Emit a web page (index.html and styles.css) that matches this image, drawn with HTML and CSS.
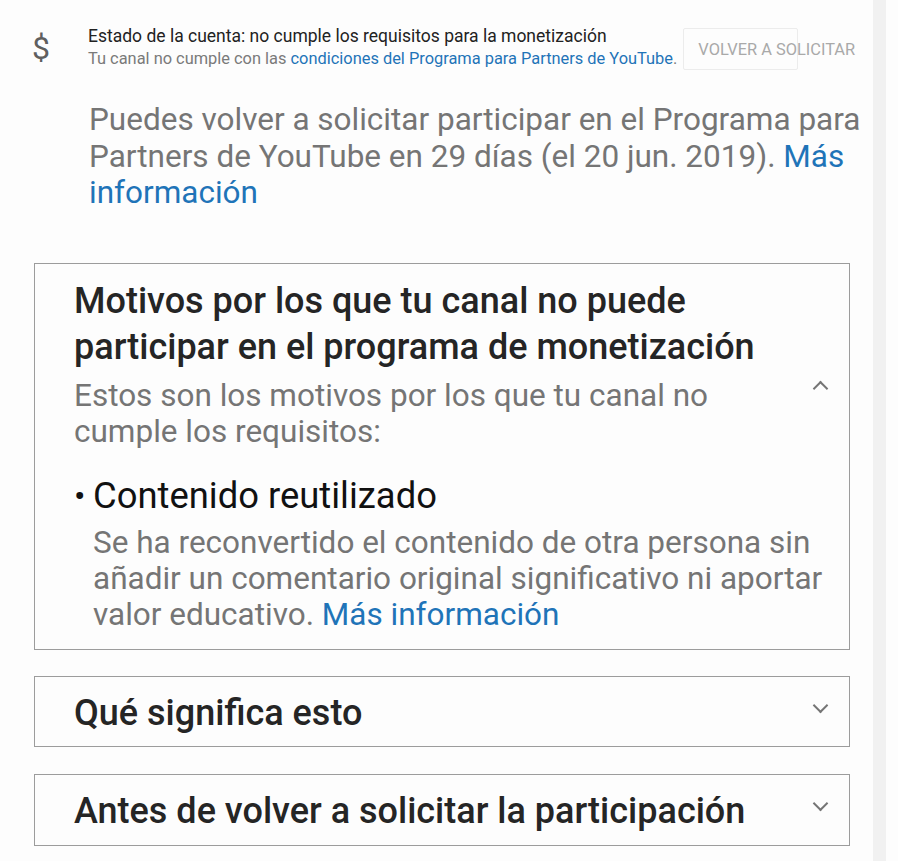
FILE: index.html
```html
<!DOCTYPE html>
<html lang="es">
<head>
    <meta charset="UTF-8">
    <meta name="viewport" content="width=device-width, initial-scale=1.0">
    <title>Estado de la cuenta</title>
    <link rel="stylesheet" href="styles.css">
</head>
<body>

    <div class="page">
        <div class="main">

            <div class="status">
                <div class="status-icon">$</div>
                <div class="status-text">
                    <div class="status-title">Estado de la cuenta: no cumple los requisitos para la monetización</div>
                    <div class="status-sub">Tu canal no cumple con las <a href="#">condiciones del Programa para Partners de YouTube</a>.</div>
                </div>
                <button type="button" class="reapply">VOLVER A SOLICITAR</button>
            </div>

            <p class="notice">
                Puedes volver a solicitar participar en el Programa para Partners de YouTube en 29 días (el 20 jun. 2019). <a href="#">Más información</a>
            </p>

            <div class="card open">
                <h2>Motivos por los que tu canal no puede participar en el programa de monetización</h2>
                <span class="chevron up"></span>
                <p class="card-sub">Estos son los motivos por los que tu canal no cumple los requisitos:</p>

                <div class="reason">
                    <div class="reason-title"><span class="bullet">•</span>Contenido reutilizado</div>
                    <p class="reason-text">Se ha reconvertido el contenido de otra persona sin añadir un comentario original significativo ni aportar valor educativo. <a href="#">Más información</a></p>
                </div>
            </div>

            <div class="card">
                <h2>Qué significa esto</h2>
                <span class="chevron"></span>
            </div>

            <div class="card last">
                <h2>Antes de volver a solicitar la participación</h2>
                <span class="chevron"></span>
            </div>

        </div>
        <div class="track"></div>
    </div>

</body>
</html>
```

FILE: styles.css
```css
body {
    margin: 0;
    font-family: Roboto, "Liberation Sans", sans-serif;
    background-color: #fdfdfd;
}

a {
    color: #1f74b8;
    text-decoration: none;
}

.page {
    display: flex;
    height: 100vh;
    overflow: hidden;
}

.main {
    width: 816px;
    padding: 25px 23px 0 34px;
}

.track {
    width: 13px;
    background-color: #f1f1f1;
}

.status {
    display: flex;
    align-items: flex-start;
}

.status-icon {
    width: 54px;
    margin-left: -2px;
    padding: 3px 0 0 0;
    font-size: 32px;
    line-height: 40px;
    color: #5f5f5f;
}

.status-text {
    margin-left: 2px;
}

.status-title {
    font-size: 17.5px;
    line-height: 22px;
    color: #222;
}

.status-sub {
    font-size: 16.4px;
    line-height: 24px;
    color: #7a7a7a;
}

.reapply {
    margin: 3px 0 0 6px;
    width: 115px;
    height: 42px;
    padding: 0 0 0 14px;
    background-color: #fdfdfd;
    border: 1px solid #ececec;
    border-radius: 2px;
    color: #a9a9a9;
    font-family: inherit;
    font-size: 16.4px;
    text-align: left;
    white-space: nowrap;
    overflow: visible;
}

.notice {
    margin: 31px -23px 0 0;
    padding-left: 55px;
    font-size: 31.5px;
    line-height: 36.5px;
    color: #757575;
}

.card {
    position: relative;
    border: 1px solid #9c9c9c;
    padding: 14px 40px 0 39px;
    height: 71px;
    box-sizing: border-box;
    margin-top: 26px;
}

.card.open {
    height: auto;
    margin-top: 51px;
    padding-bottom: 16px;
}

.card.last {
    height: 72px;
    margin-top: 27px;
}

.card h2 {
    margin: 0 -25px 0 0;
    font-size: 36px;
    font-weight: 500;
    line-height: 46px;
    color: #252525;
}

.card:not(.open) h2 {
    line-height: 44px;
}

.card-sub {
    margin: 8px 90px 0 0;
    font-size: 31.5px;
    line-height: 36px;
    color: #757575;
}

.reason {
    margin-top: 26px;
}

.reason-title {
    display: flex;
    font-size: 36.4px;
    line-height: 40px;
    color: #111;
}

.bullet {
    width: 19px;
    font-size: 34px;
}

.reason-text {
    margin: 9px -26px 0 19px;
    font-size: 31.5px;
    line-height: 36px;
    color: #757575;
}

.chevron {
    position: absolute;
    right: 23px;
    top: 23px;
    width: 9px;
    height: 9px;
    border-right: 2px solid #757575;
    border-bottom: 2px solid #757575;
    transform: rotate(45deg);
}

.chevron.up {
    top: 119px;
    transform: rotate(-135deg);
}
```
